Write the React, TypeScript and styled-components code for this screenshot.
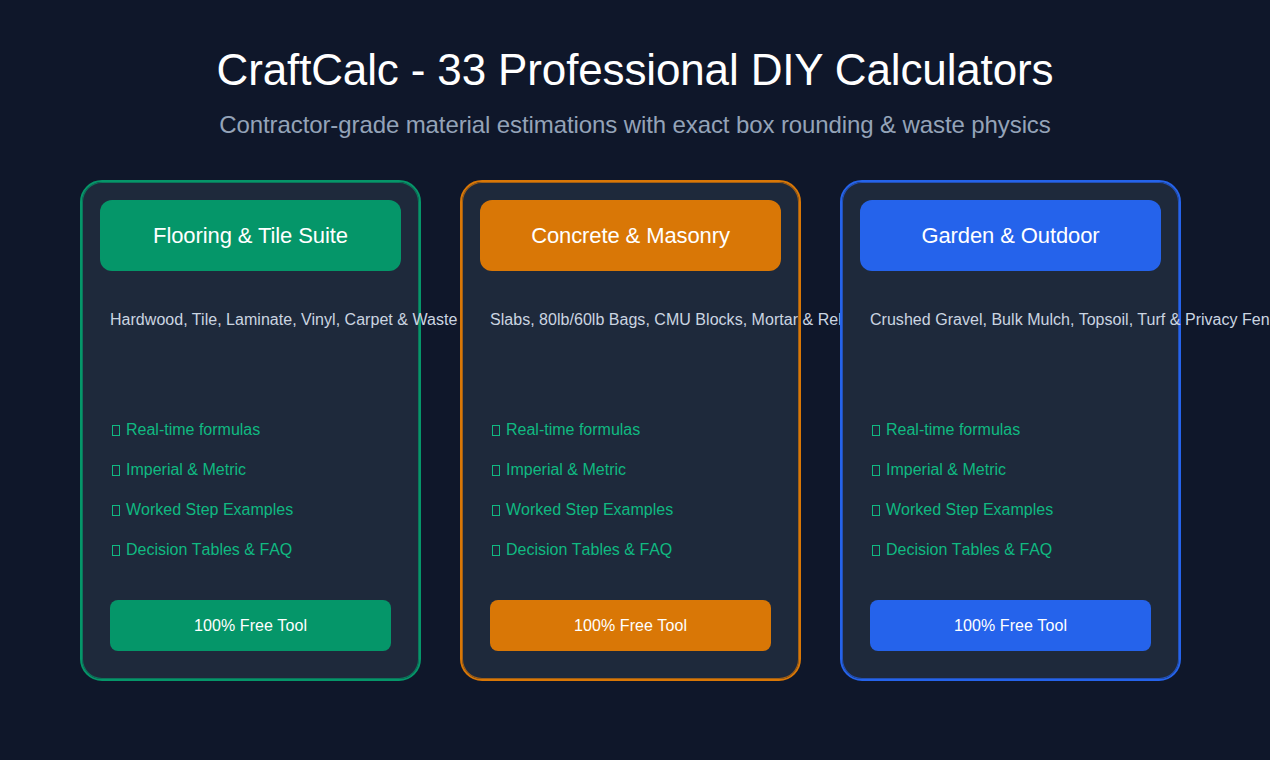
import React from "react";
import styled, { createGlobalStyle } from "styled-components";

const GlobalStyle = createGlobalStyle`
  html, body {
    margin: 0;
    padding: 0;
    background: #0f172a;
  }
  body {
    width: 1270px;
    height: 760px;
    overflow: hidden;
    font-family: "Liberation Sans", Arial, sans-serif;
  }
`;

const Page = styled.div`
  box-sizing: border-box;
  width: 1270px;
  height: 760px;
  padding-top: 44px;
  overflow: hidden;
  background: #0f172a;
`;

const Title = styled.h1`
  margin: 0;
  height: 52px;
  font-size: 44px;
  line-height: 52px;
  font-weight: 400;
  letter-spacing: -0.14px;
  text-align: center;
  color: #ffffff;
`;

const Subtitle = styled.p`
  margin: 15px 0 0;
  height: 28px;
  font-size: 24px;
  line-height: 28px;
  letter-spacing: -0.1px;
  text-align: center;
  color: #94a3b8;
`;

const Cards = styled.div`
  display: flex;
  gap: 39px;
  margin-top: 41px;
  padding-left: 80px;
`;

// each card is its own stacking context, so the next card covers long text
const Card = styled.section<{ $accent: string }>`
  position: relative;
  z-index: 0;
  box-sizing: border-box;
  flex: 0 0 341px;
  min-width: 0;
  height: 501px;
  padding: 18px;
  display: flex;
  flex-direction: column;
  background: #1e293b;
  border: 2px solid ${(p) => p.$accent};
  box-shadow: inset 0 0 0 1px ${(p) => p.$accent}b0;
  border-radius: 22px;
`;

const CardHeader = styled.h2<{ $accent: string }>`
  margin: 0;
  flex: 0 0 71px;
  width: 301px;
  display: flex;
  align-items: center;
  justify-content: center;
  font-size: 22px;
  font-weight: 400;
  letter-spacing: -0.1px;
  color: #ffffff;
  background: ${(p) => p.$accent};
  border-radius: 12px;
`;

const Description = styled.p`
  margin: 40px 0 0 10px;
  height: 18px;
  font-size: 16px;
  line-height: 18px;
  letter-spacing: 0.03px;
  white-space: nowrap;
  color: #cbd5e1;
`;

const Features = styled.ul`
  margin: 92px 0 0 10px;
  padding: 0;
  list-style: none;
  display: flex;
  flex-direction: column;
  gap: 22px;
`;

const Feature = styled.li`
  display: flex;
  align-items: center;
  height: 18px;
  font-size: 16px;
  line-height: 18px;
  font-kerning: none;
  white-space: nowrap;
  color: #10b981;
`;

/* the missing-glyph box in front of each feature */
const MissingGlyph = styled.span`
  box-sizing: border-box;
  flex: 0 0 8px;
  height: 11px;
  margin: 0 6px 0 2px;
  border: 1px solid #10b981;
`;

const FreeButton = styled.button<{ $accent: string }>`
  margin: 41px 0 0 10px;
  flex: 0 0 51px;
  width: 281px;
  padding: 0;
  border: 0;
  border-radius: 8px;
  font-family: inherit;
  font-size: 16px;
  letter-spacing: 0.1px;
  color: #ffffff;
  background: ${(p) => p.$accent};
`;

const suites = [
  {
    title: "Flooring & Tile Suite",
    accent: "#059669",
    text: "Hardwood, Tile, Laminate, Vinyl, Carpet & Waste",
  },
  {
    title: "Concrete & Masonry",
    accent: "#d97706",
    text: "Slabs, 80lb/60lb Bags, CMU Blocks, Mortar & Rebar",
  },
  {
    title: "Garden & Outdoor",
    accent: "#2563eb",
    text: "Crushed Gravel, Bulk Mulch, Topsoil, Turf & Privacy Fence",
  },
];

const features = [
  "Real-time formulas",
  "Imperial & Metric",
  "Worked Step Examples",
  "Decision Tables & FAQ",
];

export default function App() {
  return (
    <>
      <GlobalStyle />
      <Page>
        <Title>CraftCalc - 33 Professional DIY Calculators</Title>
        <Subtitle>
          Contractor-grade material estimations with exact box rounding &amp; waste physics
        </Subtitle>
        <Cards>
          {suites.map((s) => (
            <Card key={s.title} $accent={s.accent}>
              <CardHeader $accent={s.accent}>{s.title}</CardHeader>
              <Description>{s.text}</Description>
              <Features>
                {features.map((f) => (
                  <Feature key={f}>
                    <MissingGlyph />
                    {f}
                  </Feature>
                ))}
              </Features>
              <FreeButton $accent={s.accent}>100% Free Tool</FreeButton>
            </Card>
          ))}
        </Cards>
      </Page>
    </>
  );
}
